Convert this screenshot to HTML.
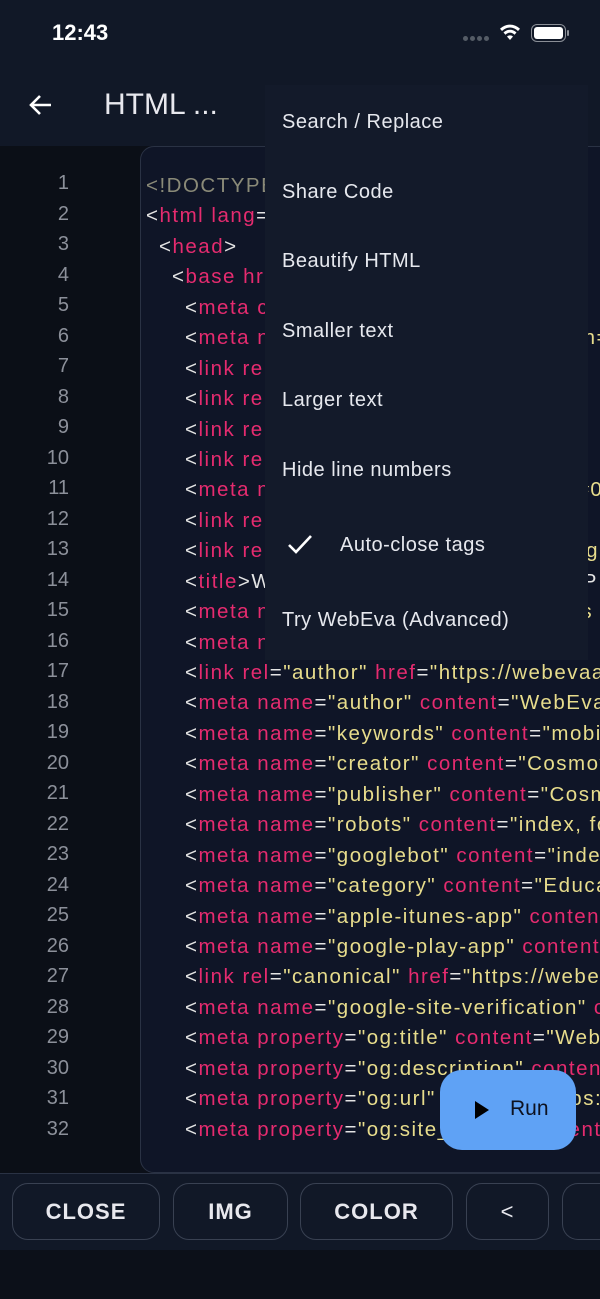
<!DOCTYPE html>
<html><head><meta charset="utf-8"><style>
*{margin:0;padding:0;box-sizing:border-box}
body{width:600px;height:1299px;background:#0c1019;font-family:"Liberation Sans",sans-serif;position:relative;overflow:hidden}
.top{position:absolute;left:0;top:0;width:600px;height:146px;background:#111827}
.time{position:absolute;left:52px;top:20px;color:#fff;font-size:22px;font-weight:bold}
.title{position:absolute;left:104px;top:88px;color:#e8e8ee;font-size:30px}
.gutter{position:absolute;left:0;top:146px;width:140px;height:1027px;background:#0b0f17}
.panel{position:absolute;left:140px;top:146px;width:480px;height:1027px;background:#0f1527;border:1px solid #2a3244;border-radius:14px}
.ln{position:absolute;left:0;width:69px;text-align:right;color:#8c909a;font-size:20px}
.code{position:absolute;left:146px;top:11px;font-size:20.5px;letter-spacing:1.5px;color:#e4e4e4;line-height:30.45px;width:600px}
.code div{height:30.45px;white-space:pre}
.i1{padding-left:13px}.i2{padding-left:26px}.i3{padding-left:39px}
.p{color:#e52b6f}.y{color:#e7dc8c}.g{color:#8a8a78}
.clip{position:absolute;left:0;top:160px;width:600px;height:990px;overflow:hidden}
.menu{position:absolute;left:265px;top:85px;width:323px;height:575px;background:#131a2a}
.mi{position:absolute;left:17px;color:#e6e8ee;font-size:20px;letter-spacing:.5px}
.run{position:absolute;left:440px;top:1070px;width:136px;height:80px;background:#5fa2f5;border-radius:22px}
.bar{position:absolute;left:0;top:1173px;width:600px;height:77px;background:#111827;border-top:1px solid #2a3244}
.btn{position:absolute;top:1183px;height:57px;border:1.5px solid #394152;border-radius:16px;color:#e8e8ee;font-size:22px;font-weight:bold;letter-spacing:1px;display:flex;align-items:center;justify-content:center}
</style></head><body>
<div class="top"></div>
<div class="time">12:43</div>
<div style="position:absolute;left:463px;top:36px;width:26px;height:6px;display:flex;gap:2px"><i style="width:5px;height:5px;border-radius:3px;background:#555c66"></i><i style="width:5px;height:5px;border-radius:3px;background:#555c66"></i><i style="width:5px;height:5px;border-radius:3px;background:#555c66"></i><i style="width:5px;height:5px;border-radius:3px;background:#555c66"></i></div>
<svg style="position:absolute;left:498px;top:22px" width="24" height="20" viewBox="0 0 24 20"><path d="M12 18l-3-3.5a4.5 4.5 0 0 1 6 0z M5.5 10.5a9 9 0 0 1 13 0l-2 2.2a6 6 0 0 0-9 0z M2 6.8a14 14 0 0 1 20 0l-2 2.2a11 11 0 0 0-16 0z" fill="#fff"/></svg>
<div style="position:absolute;left:531px;top:24px;width:35px;height:18px;border:1.5px solid #8a8e96;border-radius:6px;padding:2px"><div style="width:100%;height:100%;background:#fff;border-radius:3px"></div></div>
<div style="position:absolute;left:567px;top:30px;width:2px;height:6px;background:#8a8e96;border-radius:1px"></div>
<svg style="position:absolute;left:28px;top:92px" width="26" height="26" viewBox="0 0 26 26"><path d="M23 13H4M12 4l-9 9 9 9" stroke="#fff" stroke-width="2.6" fill="none"/></svg>
<div class="title">HTML ...</div>
<div class="gutter"></div>
<div class="panel"></div>
<div class="clip">
<div style="position:absolute;left:0;top:0">
<div class="ln" style="top:12px">1</div><div class="ln" style="top:42.5px">2</div><div class="ln" style="top:73px">3</div><div class="ln" style="top:103.5px">4</div><div class="ln" style="top:134px">5</div><div class="ln" style="top:164.5px">6</div><div class="ln" style="top:195px">7</div><div class="ln" style="top:225.5px">8</div><div class="ln" style="top:256px">9</div><div class="ln" style="top:286.5px">10</div><div class="ln" style="top:317px">11</div><div class="ln" style="top:347.5px">12</div><div class="ln" style="top:378px">13</div><div class="ln" style="top:408.5px">14</div><div class="ln" style="top:439px">15</div><div class="ln" style="top:469.5px">16</div><div class="ln" style="top:500px">17</div><div class="ln" style="top:530.5px">18</div><div class="ln" style="top:561px">19</div><div class="ln" style="top:591.5px">20</div><div class="ln" style="top:622px">21</div><div class="ln" style="top:652.5px">22</div><div class="ln" style="top:683px">23</div><div class="ln" style="top:713.5px">24</div><div class="ln" style="top:744px">25</div><div class="ln" style="top:774.5px">26</div><div class="ln" style="top:805px">27</div><div class="ln" style="top:835.5px">28</div><div class="ln" style="top:866px">29</div><div class="ln" style="top:896.5px">30</div><div class="ln" style="top:927px">31</div><div class="ln" style="top:957.5px">32</div><div class="ln" style="top:988px">33</div>
</div>
<div class="code"><div><span class="g">&lt;!DOCTYPE html&gt;</span></div><div>&lt;<span class="p">html lang</span>=<span class="y">"en"</span>&gt;            <span class="y">_</span></div><div class="i1">&lt;<span class="p">head</span>&gt;</div><div class="i2">&lt;<span class="p">base href</span>=<span class="y">"https://webevaapp.com/"</span>&gt;</div><div class="i3">&lt;<span class="p">meta charset</span>=<span class="y">"UTF-8"</span>&gt;</div><div class="i3">&lt;<span class="p">meta name</span>=<span class="y">"viewport" content="width=</span></div><div class="i3">&lt;<span class="p">link rel</span>=<span class="y">"icon" href="/favicon.png" m</span></div><div class="i3">&lt;<span class="p">link rel</span>=<span class="y">"icon" href="/favicon.png" m</span></div><div class="i3">&lt;<span class="p">link rel</span>=<span class="y">"apple-touch-icon" href="/ic</span></div><div class="i3">&lt;<span class="p">link rel</span>=<span class="y">"preconnect" href="https://fo</span></div><div class="i3">&lt;<span class="p">meta name</span>=<span class="y">"theme-color" content="#0</span></div><div class="i3">&lt;<span class="p">link rel</span>=<span class="y">"manifest" href="/manifest.j"</span></div><div class="i3">&lt;<span class="p">link rel</span>=<span class="y">"stylesheet" href="/css/main.g</span></div><div class="i3">&lt;<span class="p">title</span>&gt;WebEva - HTML Editor &amp; Code P</div><div class="i3">&lt;<span class="p">meta name</span>=<span class="y">"description" content="es</span></div><div class="i3">&lt;<span class="p">meta name</span>=<span class="y">"application-name" co</span><span class="p">nt</span></div><div class="i3">&lt;<span class="p">link rel</span>=<span class="y">"author"</span> <span class="p">href</span>=<span class="y">"https://webevaapp</span></div><div class="i3">&lt;<span class="p">meta name</span>=<span class="y">"author"</span> <span class="p">content</span>=<span class="y">"WebEva</span></div><div class="i3">&lt;<span class="p">meta name</span>=<span class="y">"keywords"</span> <span class="p">content</span>=<span class="y">"mobile</span></div><div class="i3">&lt;<span class="p">meta name</span>=<span class="y">"creator"</span> <span class="p">content</span>=<span class="y">"Cosmov</span></div><div class="i3">&lt;<span class="p">meta name</span>=<span class="y">"publisher"</span> <span class="p">content</span>=<span class="y">"Cosmo</span></div><div class="i3">&lt;<span class="p">meta name</span>=<span class="y">"robots"</span> <span class="p">content</span>=<span class="y">"index, fo</span></div><div class="i3">&lt;<span class="p">meta name</span>=<span class="y">"googlebot"</span> <span class="p">content</span>=<span class="y">"index</span></div><div class="i3">&lt;<span class="p">meta name</span>=<span class="y">"category"</span> <span class="p">content</span>=<span class="y">"Educa</span></div><div class="i3">&lt;<span class="p">meta name</span>=<span class="y">"apple-itunes-app"</span> <span class="p">content</span></div><div class="i3">&lt;<span class="p">meta name</span>=<span class="y">"google-play-app"</span> <span class="p">content</span></div><div class="i3">&lt;<span class="p">link rel</span>=<span class="y">"canonical"</span> <span class="p">href</span>=<span class="y">"https://webev</span></div><div class="i3">&lt;<span class="p">meta name</span>=<span class="y">"google-site-verification"</span> <span class="p">c</span></div><div class="i3">&lt;<span class="p">meta property</span>=<span class="y">"og:title"</span> <span class="p">content</span>=<span class="y">"Web</span></div><div class="i3">&lt;<span class="p">meta property</span>=<span class="y">"og:description"</span> <span class="p">conten</span></div><div class="i3">&lt;<span class="p">meta property</span>=<span class="y">"og:url"</span> <span class="p">content</span>=<span class="y">"https:</span></div><div class="i3">&lt;<span class="p">meta property</span>=<span class="y">"og:site_name"</span> <span class="p">content</span>=</div><div class="i3">&lt;<span class="p">meta property</span>=<span class="y">"og:image"</span> <span class="p">content</span>=</div></div>
</div>
<div class="menu">
<div class="mi" style="top:26px">Search / Replace</div>
<div class="mi" style="top:96px">Share Code</div>
<div class="mi" style="top:165px">Beautify HTML</div>
<div class="mi" style="top:235px">Smaller text</div>
<div class="mi" style="top:304px">Larger text</div>
<div class="mi" style="top:374px">Hide line numbers</div>
<svg style="position:absolute;left:21px;top:448px" width="28" height="24" viewBox="0 0 28 24"><path d="M3 12l7 7L25 3" stroke="#fff" stroke-width="2.6" fill="none"/></svg>
<div class="mi" style="top:449px;left:75px">Auto-close tags</div>
<div class="mi" style="top:524px">Try WebEva (Advanced)</div>
</div>
<div class="run"><svg style="position:absolute;left:34px;top:31px" width="16" height="18" viewBox="0 0 16 18"><path d="M1 0L15 9L1 18z" fill="#000"/></svg><span style="position:absolute;left:70px;top:27px;font-size:21px;color:#0d1220">Run</span></div>
<div class="bar"></div>
<div class="btn" style="left:12px;width:148px">CLOSE</div>
<div class="btn" style="left:173px;width:115px">IMG</div>
<div class="btn" style="left:300px;width:153px">COLOR</div>
<div class="btn" style="left:466px;width:83px;font-weight:normal">&lt;</div>
<div class="btn" style="left:562px;width:80px;border-right:none"></div>
</body></html>
